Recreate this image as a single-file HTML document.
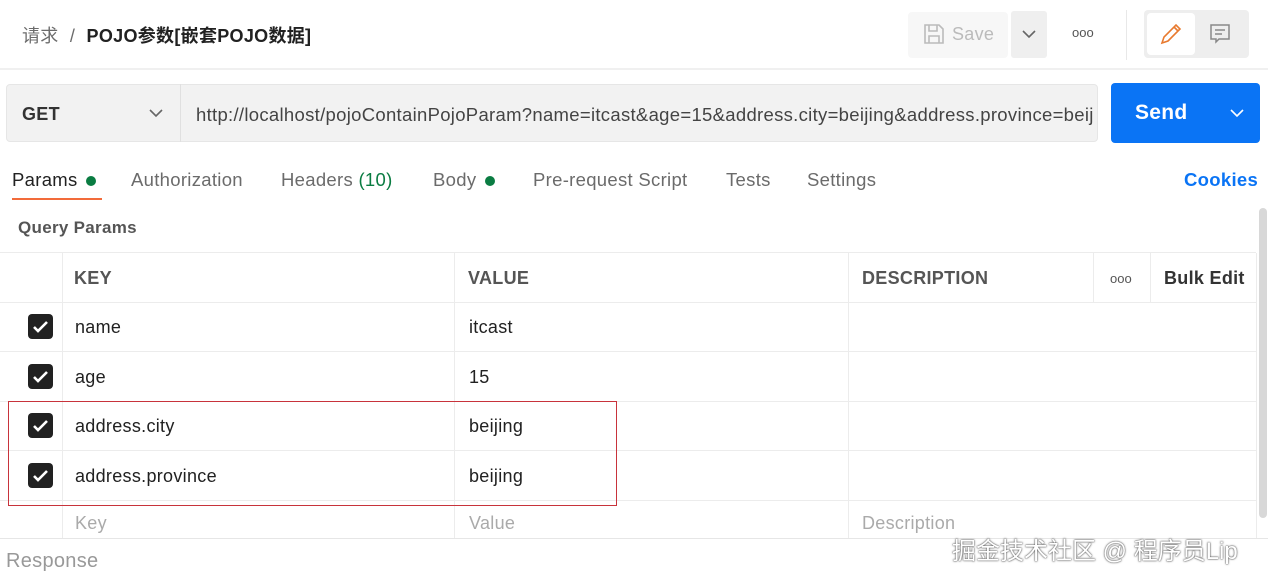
<!DOCTYPE html><html><head><meta charset="utf-8"><style>
*{margin:0;padding:0;box-sizing:border-box}
body{width:1268px;height:579px;overflow:hidden;background:#fff;font-family:"Liberation Sans","Noto Sans CJK SC",sans-serif;position:relative;color:#212121;letter-spacing:0.3px}
.a{position:absolute}
.cb{position:absolute;left:28px;width:25px;height:25px;background:#212121;border-radius:4px}
.cb svg{position:absolute;left:4px;top:5px}
.row{position:absolute;left:0;width:1256px;height:50px;border-bottom:1px solid #ececec;font-size:18px}
.row span{position:absolute;top:15px}
.hd span{font-weight:bold;color:#555}
.vl{position:absolute;top:253px;height:286px;width:1px;background:#ececec}
.t{position:absolute;top:169px;font-size:18.5px;color:#6b6b6b}
</style></head><body>
<div class="a" style="left:22px;top:22px;font-size:18px;color:#6b6b6b">请求 <span style="margin:0 6px">/</span> <b style="color:#212121">POJO参数[嵌套POJO数据]</b></div>
<div class="a" style="left:908px;top:12px;width:100px;height:46px;background:#f7f7f7;border-radius:4px"></div>
<svg class="a" style="left:922px;top:22px" width="24" height="24" fill="none" stroke="#bbb" stroke-width="1.6"><path d="M3 3h14l4 4v14H3z M7 3v6h8V3 M7 21v-7h10v7"/></svg>
<div class="a" style="left:952px;top:24px;font-size:18px;color:#bbb">Save</div>
<div class="a" style="left:1011px;top:11px;width:36px;height:47px;background:#efefef;border-radius:3px"></div>
<svg class="a" style="left:1021px;top:28px" width="16" height="12" fill="none" stroke="#666" stroke-width="1.6"><path d="M2 3l6 6 6-6"/></svg>
<div class="a" style="left:1072px;top:25px;font-size:13px;color:#555;letter-spacing:0">ooo</div>
<div class="a" style="left:1126px;top:10px;width:1px;height:50px;background:#e8e8e8"></div>
<div class="a" style="left:1144px;top:10px;width:105px;height:48px;background:#eeeeee;border-radius:4px"></div>
<div class="a" style="left:1147px;top:13px;width:48px;height:42px;background:#fff;border-radius:4px"></div>
<svg class="a" style="left:1158px;top:21px" width="26" height="26" fill="none" stroke="#e87a2f" stroke-width="1.6"><path d="M4 22l2-6L18 4l4 4L10 20z M16 6l4 4"/></svg>
<svg class="a" style="left:1208px;top:22px" width="24" height="24" fill="none" stroke="#888" stroke-width="1.5"><path d="M3 3h18v14H11l-3 3v-3H3z M7 8h10 M7 12h7"/></svg>
<div class="a" style="left:0;top:68px;width:1268px;height:2px;background:#f0f0f0"></div>
<div class="a" style="left:6px;top:84px;width:1092px;height:58px;background:#f2f2f2;border:1px solid #e6e6e6;border-radius:4px"></div>
<div class="a" style="left:180px;top:84px;width:1px;height:58px;background:#e0e0e0"></div>
<div class="a" style="left:22px;top:104px;font-size:18px;font-weight:bold;color:#333">GET</div>
<svg class="a" style="left:148px;top:107px" width="16" height="12" fill="none" stroke="#666" stroke-width="1.6"><path d="M2 3l6 6 6-6"/></svg>
<div class="a" style="left:196px;top:104px;font-size:18.5px;color:#444;width:898px;overflow:hidden;white-space:nowrap">http://localhost/pojoContainPojoParam?name=itcast&amp;age=15&amp;address.city=beijing&amp;address.province=beijing</div>
<div class="a" style="left:1111px;top:83px;width:149px;height:60px;background:#0a74f5;border-radius:4px"></div>
<div class="a" style="left:1135px;top:101px;font-size:21px;font-weight:bold;color:#fff">Send</div>
<svg class="a" style="left:1229px;top:107px" width="16" height="12" fill="none" stroke="#fff" stroke-width="1.6"><path d="M2 3l6 6 6-6"/></svg>
<div class="t" style="left:12px;color:#212121">Params <span style="display:inline-block;width:10px;height:10px;border-radius:5px;background:#0a7c42;margin-left:3px"></span></div>
<div class="a" style="left:12px;top:198px;width:90px;height:2px;background:#f26b3a"></div>
<div class="t" style="left:131px">Authorization</div>
<div class="t" style="left:281px">Headers <span style="color:#0a7c42">(10)</span></div>
<div class="t" style="left:433px">Body <span style="display:inline-block;width:10px;height:10px;border-radius:5px;background:#0a7c42;margin-left:3px"></span></div>
<div class="t" style="left:533px">Pre-request Script</div>
<div class="t" style="left:726px">Tests</div>
<div class="t" style="left:807px">Settings</div>
<div class="t" style="left:1184px;color:#0a74f5;font-weight:bold">Cookies</div>
<div class="a" style="top:218px;left:18px;font-size:17px;color:#555;font-weight:bold">Query Params</div>
<div class="a" style="left:0;top:252px;width:1256px;height:1px;background:#ececec"></div>
<div class="row hd" style="top:253px"><span style="left:74px">KEY</span><span style="left:468px">VALUE</span><span style="left:862px">DESCRIPTION</span><span style="left:1110px;font-size:13px;top:18px;letter-spacing:0;font-weight:normal">ooo</span><span style="left:1164px;color:#333">Bulk Edit</span></div>
<div class="row" style="top:302px"><div class="cb" style="top:12px"><svg width="17" height="15" fill="none" stroke="#fff" stroke-width="2.6"><path d="M2 8l4 4 9-9"/></svg></div><span style="left:75px">name</span><span style="left:469px">itcast</span></div>
<div class="row" style="top:352px"><div class="cb" style="top:12px"><svg width="17" height="15" fill="none" stroke="#fff" stroke-width="2.6"><path d="M2 8l4 4 9-9"/></svg></div><span style="left:75px">age</span><span style="left:469px">15</span></div>
<div class="row" style="top:401px"><div class="cb" style="top:12px"><svg width="17" height="15" fill="none" stroke="#fff" stroke-width="2.6"><path d="M2 8l4 4 9-9"/></svg></div><span style="left:75px">address.city</span><span style="left:469px">beijing</span></div>
<div class="row" style="top:451px"><div class="cb" style="top:12px"><svg width="17" height="15" fill="none" stroke="#fff" stroke-width="2.6"><path d="M2 8l4 4 9-9"/></svg></div><span style="left:75px">address.province</span><span style="left:469px">beijing</span></div>
<div class="row" style="top:500px;border:none"><span style="left:75px;color:#aaa;top:13px">Key</span><span style="left:469px;color:#aaa;top:13px">Value</span><span style="left:862px;color:#aaa;top:13px">Description</span></div>
<div class="vl" style="left:62px"></div><div class="vl" style="left:454px"></div><div class="vl" style="left:848px"></div><div class="vl" style="left:1093px;height:49px"></div><div class="vl" style="left:1150px;height:49px"></div><div class="vl" style="left:1256px"></div>
<div class="a" style="left:1259px;top:208px;width:8px;height:310px;background:#d8d8d8;border-radius:4px"></div>
<div class="a" style="left:8px;top:401px;width:609px;height:105px;border:1px solid #c8333b"></div>
<div class="a" style="left:0;top:538px;width:1268px;height:1px;background:#e6e6e6"></div>
<div class="a" style="left:6px;top:550px;font-size:20px;color:#999">Response</div>
<div class="a" style="left:952px;top:531px;font-size:24px;color:#fff;letter-spacing:0;text-shadow:0 0 2px #555,0 0 1px #333">掘金技术社区 @ 程序员Lip</div>
</body></html>
